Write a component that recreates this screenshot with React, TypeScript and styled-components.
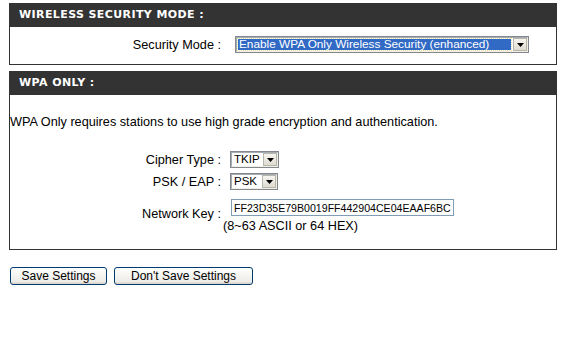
import React from "react";
import styled, { createGlobalStyle } from "styled-components";

const GlobalStyle = createGlobalStyle`
  body {
    margin: 0;
    background: #ffffff;
    font-family: "Liberation Sans", Arial, sans-serif;
    font-size: 12.7px;
    color: #000000;
  }
`;

const App: React.FC = () => {
  return (
    <Page>
      <GlobalStyle />
      <Panel>
        <Header>WIRELESS SECURITY MODE :</Header>
        <Body $pad="10px 0 12px">
          <Row $gap={15}>
            <Label>Security Mode :</Label>
            <Select $width={292}>
              <SelectText $highlight>Enable WPA Only Wireless Security (enhanced)</SelectText>
              <Arrow />
            </Select>
          </Row>
        </Body>
      </Panel>

      <Panel>
        <Header>WPA ONLY :</Header>
        <Body $pad="20px 0 16px">
          <Intro>WPA Only requires stations to use high grade encryption and authentication.</Intro>
          <Fields>
            <Row $gap={10}>
              <Label>Cipher Type :</Label>
              <Select $width={47}>
                <SelectText>TKIP</SelectText>
                <Arrow />
              </Select>
            </Row>
            <Row $gap={10}>
              <Label>PSK / EAP :</Label>
              <Select $width={46}>
                <SelectText>PSK</SelectText>
                <Arrow />
              </Select>
            </Row>
            <KeyRow>
              <KeyLabel>Network Key :</KeyLabel>
              <KeyCell>
                <KeyInput defaultValue="FF23D35E79B0019FF442904CE04EAAF6BC15" />
                <Hint>(8~63 ASCII or 64 HEX)</Hint>
              </KeyCell>
            </KeyRow>
          </Fields>
        </Body>
      </Panel>

      <Buttons>
        <Button $width={97}>Save Settings</Button>
        <Button $width={139}>Don't Save Settings</Button>
      </Buttons>
    </Page>
  );
};

export default App;

const Arrow: React.FC = () => (
  <ArrowBox>
    <svg width="7" height="4" viewBox="0 0 7 4">
      <path d="M0 0h7L3.5 4z" fill="#000" />
    </svg>
  </ArrowBox>
);

const Page = styled.div`
  padding: 3px 6px 0 9px;
  width: 548px;
`;

const Panel = styled.section`
  margin-bottom: 6px;
`;

const Header = styled.div`
  background: #333333;
  color: #ffffff;
  height: 24px;
  line-height: 24px;
  padding-left: 10px;
  font-family: "DejaVu Sans", Verdana, sans-serif;
  font-weight: bold;
  font-size: 11px;
  letter-spacing: 0.4px;
`;

const Body = styled.div<{ $pad: string }>`
  border: 1px solid #333333;
  border-top: none;
  padding: ${({ $pad }) => $pad};
`;

const Intro = styled.div`
  margin-bottom: 23px;
`;

const Fields = styled.div`
  display: flex;
  flex-direction: column;
  gap: 7px;
`;

const Row = styled.div<{ $gap: number }>`
  display: grid;
  grid-template-columns: 211px auto;
  column-gap: ${({ $gap }) => $gap}px;
  align-items: center;
  justify-content: start;
`;

const KeyRow = styled(Row).attrs({ $gap: 10 })`
  margin-top: 3px;
`;

const Label = styled.div`
  text-align: right;
`;

const KeyLabel = styled(Label)`
  margin-bottom: 4px;
`;

const Select = styled.div<{ $width: number }>`
  width: ${({ $width }) => $width}px;
  height: 15px;
  box-sizing: border-box;
  border: 1px solid;
  border-color: #a5acb2 #f1efe2 #f1efe2 #a5acb2;
  outline: 1px solid #828790;
  background: #ffffff;
  display: flex;
  align-items: stretch;
  padding: 1px;
  gap: 2px;
`;

const SelectText = styled.div<{ $highlight?: boolean }>`
  flex: 1;
  display: flex;
  align-items: center;
  font-size: ${({ $highlight }) => ($highlight ? "11.8px" : "11.5px")};
  line-height: 11px;
  padding-left: 1px;
  white-space: nowrap;
  background: ${({ $highlight }) => ($highlight ? "#316ac5" : "transparent")};
  color: ${({ $highlight }) => ($highlight ? "#ffffff" : "#000000")};
  outline: ${({ $highlight }) => ($highlight ? "1px dotted #e8e0a0" : "none")};
`;

const ArrowBox = styled.div`
  width: 14px;
  background: linear-gradient(#f6f5f0, #dedbd0);
  border: 1px solid #b8b6ac;
  box-sizing: border-box;
  display: flex;
  align-items: center;
  justify-content: center;
  margin: -1px -1px -1px 0;
`;

const KeyCell = styled.div`
  display: flex;
  flex-direction: column;
`;

const KeyInput = styled.input`
  width: 223px;
  height: 17px;
  box-sizing: border-box;
  border: 1px solid #7f9db9;
  font-family: "Liberation Sans", Arial, sans-serif;
  font-size: 10.6px;
  padding: 0 2px;
  margin: 0;
  outline: none;
`;

const Hint = styled.div`
  margin-left: -8px;
  margin-top: 3px;
  line-height: 14px;
`;

const Buttons = styled.div`
  display: flex;
  gap: 7px;
  margin-top: 17px;
  padding-left: 1px;
`;

const Button = styled.button<{ $width: number }>`
  width: ${({ $width }) => $width}px;
  height: 18px;
  padding: 0;
  border: 1px solid #003c74;
  border-radius: 3px;
  background: linear-gradient(#ffffff, #ecebe6 85%, #d6d0c5);
  font-family: "Liberation Sans", Arial, sans-serif;
  font-size: 12px;
  color: #000000;
`;
